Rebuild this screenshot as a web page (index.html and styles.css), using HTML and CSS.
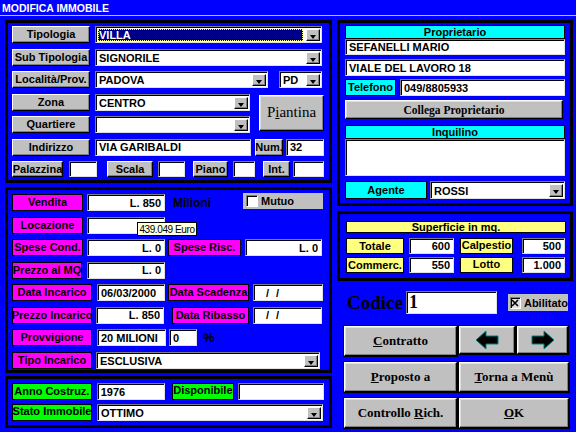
FILE: index.html
```html
<!DOCTYPE html>
<html lang="it">
<head>
<meta charset="utf-8">
<title>Modifica Immobile</title>
<link rel="stylesheet" href="styles.css">
</head>
<body>
<header class="title">MODIFICA IMMOBILE</header>
<main class="main">
  <div class="col-left">
    <section class="panel p1">
      <div class="row">
        <span class="lbl gray w78">Tipologia</span>
        <span class="combo ml5 w227"><span class="val sel">VILLA</span><i class="dd"></i></span>
      </div>
      <div class="row">
        <span class="lbl gray w78">Sub Tipologia</span>
        <span class="combo ml5 w227"><span class="val">SIGNORILE</span><i class="dd"></i></span>
      </div>
      <div class="row">
        <span class="lbl gray w78">Località/Prov.</span>
        <span class="combo ml5 w173"><span class="val">PADOVA</span><i class="dd"></i></span>
        <span class="combo ml11 w43"><span class="val">PD</span><i class="dd"></i></span>
      </div>
      <div class="grp">
        <div class="grp-rows">
          <div class="row">
            <span class="lbl gray w78">Zona</span>
            <span class="combo ml5 w155"><span class="val">CENTRO</span><i class="dd"></i></span>
          </div>
          <div class="row">
            <span class="lbl gray w78">Quartiere</span>
            <span class="combo ml5 w155"><span class="val"></span><i class="dd"></i></span>
          </div>
        </div>
        <button class="btn piantina"><span>P<u>i</u>antina</span></button>
      </div>
      <div class="row">
        <span class="lbl gray w78">Indirizzo</span>
        <span class="inp ml5 w156">VIA GARIBALDI</span>
        <span class="lbl gray ml4 w28">Num.</span>
        <span class="inp ml3 w38">32</span>
      </div>
      <div class="row h16">
        <span class="lbl gray w51">Palazzina</span>
        <span class="inp ml6 w28"></span>
        <span class="lbl gray ml10 w46">Scala</span>
        <span class="inp ml5 w27"></span>
        <span class="lbl gray ml8 w35">Piano</span>
        <span class="inp ml5 w22"></span>
        <span class="lbl gray ml8 w27">Int.</span>
        <span class="inp ml3 w31"></span>
      </div>
    </section>

    <section class="panel p2">
      <div class="row">
        <span class="lbl mag w71">Vendita</span>
        <span class="inp r ml4 w78">L. 850</span>
        <span class="txt ml8">Milioni</span>
        <span class="chk mutuo"><i class="box"></i>Mutuo</span>
      </div>
      <div class="row">
        <span class="lbl mag w71">Locazione</span>
        <span class="inp r ml4 w78"></span>
      </div>
      <div class="row">
        <span class="lbl mag w71">Spese Cond.</span>
        <span class="inp r ml4 w78">L. 0</span>
        <span class="lbl mag ml3 w73">Spese Risc.</span>
        <span class="inp r ml4 w77">L. 0</span>
      </div>
      <div class="row">
        <span class="lbl mag w70">Prezzo al MQ</span>
        <span class="inp r ml5 w78">L. 0</span>
      </div>
      <div class="row">
        <span class="lbl mag w80">Data Incarico</span>
        <span class="inp ml5 w68">06/03/2000</span>
        <span class="lbl mag ml3 w81">Data Scadenza</span>
        <span class="inp ml4 w70 dates">/ /</span>
      </div>
      <div class="row">
        <span class="lbl mag w80">Prezzo Incarico</span>
        <span class="inp r ml4 w68">L. 850</span>
        <span class="lbl mag ml8 w77">Data Ribasso</span>
        <span class="inp ml4 w69 dates">/ /</span>
      </div>
      <div class="row">
        <span class="lbl mag w80">Provvigione</span>
        <span class="inp ml5 w69">20 MILIONI</span>
        <span class="inp ml3 w28">0</span>
        <span class="txt pct ml6">%</span>
      </div>
      <div class="row">
        <span class="lbl mag w80">Tipo Incarico</span>
        <span class="combo ml4 w224"><span class="val">ESCLUSIVA</span><i class="dd"></i></span>
      </div>
      <div class="tooltip">439.049 Euro</div>
    </section>

    <section class="panel p3">
      <div class="row">
        <span class="lbl grn w80">Anno Costruz.</span>
        <span class="inp ml5 w68">1976</span>
        <span class="lbl grn top ml7 w63">Disponibile</span>
        <span class="inp ml4 w86"></span>
      </div>
      <div class="row">
        <span class="lbl grn top w80">Stato Immobile</span>
        <span class="combo ml5 w226"><span class="val">OTTIMO</span><i class="dd"></i></span>
      </div>
    </section>
  </div>

  <div class="col-right">
    <section class="panel r1">
      <div class="hdr">Proprietario</div>
      <div class="inp h16">SEFANELLI MARIO</div>
      <div class="inp mt4">VIALE DEL LAVORO 18</div>
      <div class="row mt3">
        <span class="lbl cyan w51">Telefono</span>
        <span class="inp ml4 w165">049/8805933</span>
      </div>
      <button class="btn collega mt4"><span>Collega Proprietario</span></button>
      <div class="hdr mt6">Inquilino</div>
      <div class="inp area"></div>
      <div class="row mt5 h18">
        <span class="lbl cyan w82">Agente</span>
        <span class="combo ml3 w135"><span class="val">ROSSI</span><i class="dd"></i></span>
      </div>
    </section>

    <section class="panel r2">
      <div class="hdr yel">Superficie in mq.</div>
      <div class="row h16 mt5">
        <span class="lbl yel w58">Totale</span>
        <span class="inp r ml5 w45">600</span>
        <span class="lbl yel top ml6 w53">Calpestio</span>
        <span class="inp r ml9 w43">500</span>
      </div>
      <div class="row h16 mt3">
        <span class="lbl yel w58">Commerc.</span>
        <span class="inp r ml5 w45">550</span>
        <span class="lbl yel top ml6 w53">Lotto</span>
        <span class="inp r ml9 w43">1.000</span>
      </div>
    </section>

    <div class="codice">
      <span class="codice-lbl">Codice</span>
      <span class="inp codice-inp">1</span>
      <span class="chk abil"><i class="box checked"><svg width="8" height="8" viewBox="0 0 8 8"><path d="M1 1L7 7M7 1L1 7" stroke="#000" stroke-width="1.6"/></svg></i>Abilitato</span>
    </div>

    <div class="btns">
      <button class="btn big"><span><u>C</u>ontratto</span></button>
      <div class="arrows">
        <button class="btn arrow a-left"><svg width="24" height="20" viewBox="0 0 24 20"><polygon points="1,10 11,1 11,6 23,6 23,14 11,14 11,19" fill="#000" stroke="#008080" stroke-width="1"/></svg></button>
        <button class="btn arrow a-right"><svg width="24" height="20" viewBox="0 0 24 20"><polygon points="23,10 13,1 13,6 1,6 1,14 13,14 13,19" fill="#000" stroke="#008080" stroke-width="1"/></svg></button>
      </div>
      <button class="btn big"><span><u>P</u>roposto a</span></button>
      <button class="btn big"><span><u>T</u>orna a Menù</span></button>
      <button class="btn big"><span>Controllo <u>R</u>ich.</span></button>
      <button class="btn big"><span><u>O</u>K</span></button>
    </div>
  </div>
</main>
</body>
</html>
```

FILE: styles.css
```css
* { box-sizing: border-box; }
html, body { margin: 0; padding: 0; }
body {
  width: 576px;
  height: 432px;
  overflow: hidden;
  background: #0000ff;
  font-family: "Liberation Sans", Arial, sans-serif;
  font-size: 11px;
  font-weight: bold;
  color: #000;
}
.title {
  height: 16px;
  border-bottom: 1px solid #c0c0c0;
  color: #fff;
  font-size: 10.5px;
  line-height: 10px;
  padding: 3px 0 0 2px;
}
.main { display: flex; gap: 5px; padding: 4px 0 0 5px; }
.col-left { width: 327px; display: flex; flex-direction: column; }
.col-right { width: 236px; display: flex; flex-direction: column; }

.panel { border: 3px solid #000; position: relative; }
.p1 { height: 163px; padding: 3px 0 0 4px; display: flex; flex-direction: column; gap: 5.5px; }
.p2 { height: 186px; margin-top: 4px; padding: 4px 5px 0 4px; display: flex; flex-direction: column; gap: 5.5px; }
.p3 { height: 52px; margin-top: 3px; padding: 4px 5px 0 4px; display: flex; flex-direction: column; gap: 4px; }
.r1 { height: 186px; padding: 2px 5px 0 5px; display: flex; flex-direction: column; }
.r2 { height: 70px; margin-top: 5px; padding: 7px 4px 0 6px; display: flex; flex-direction: column; }

.row { display: flex; align-items: stretch; height: 17px; }
.row.h16 { height: 16px; }
.row.h18 { height: 18px; }
.grp { display: flex; align-items: flex-start; }
.grp-rows { display: flex; flex-direction: column; gap: 5.5px; }

.lbl {
  display: flex; align-items: center; justify-content: center;
  white-space: nowrap; line-height: 1;
  border: 1px solid #000;
}
.lbl.top { align-items: flex-start; padding-top: 1px; }
.gray {
  background: #c0c0c0;
  border-color: #fff #000 #000 #fff;
  box-shadow: inset -1px -1px #808080;
}
.mag { background: #ff00ff; }
.grn { background: #00ff00; }
.cyan { background: #00ffff; }
.yel { background: #ffff80; }

.inp {
  display: flex; align-items: center;
  background: #fff;
  height: 17px;
  padding: 0 3px;
  white-space: nowrap;
  border: 1px solid;
  border-color: #808080 #e0e0e0 #e0e0e0 #808080;
  box-shadow: inset 1px 1px #000;
}
.row .inp { height: auto; }
.inp.h16 { height: 16px; }
.inp.r { justify-content: flex-end; }
.inp.dates { padding-left: 12px; letter-spacing: 2px; }
.inp.area { height: 37px; }

.combo {
  display: flex; align-items: stretch;
  background: #fff;
  border: 1px solid;
  border-color: #808080 #e0e0e0 #e0e0e0 #808080;
  box-shadow: inset 1px 1px #000;
  padding: 2px 1px 1px 2px;
}
.combo .val { flex: 1; display: flex; align-items: center; padding-left: 1px; white-space: nowrap; }
.combo .val.sel {
  color: #fff;
  background: repeating-conic-gradient(#000090 0 25%, #000020 0 50%) 0 0 / 2px 2px;
  outline: 1px dotted #ffff90;
  outline-offset: -1px;
  margin-right: 3px;
}
.combo .dd {
  width: 14px;
  background: #c0c0c0;
  border: 1px solid;
  border-color: #fff #000 #000 #fff;
  box-shadow: inset -1px -1px #808080;
  position: relative;
}
.combo .dd::after {
  content: "";
  position: absolute;
  left: 3px; top: 5px;
  border-left: 3.5px solid transparent;
  border-right: 3.5px solid transparent;
  border-top: 4px solid #000;
}

.txt { display: flex; align-items: center; font-size: 12px; color: #000; }
.txt.pct { font-size: 13px; }
.chk { display: flex; align-items: center; background: #c0c0c0; gap: 3px; }
.chk .box { width: 12px; height: 12px; background: #fff; border: 1px solid; border-color: #808080 #fff #fff #808080; box-shadow: inset 1px 1px #000; display: flex; align-items: center; justify-content: center; }
.mutuo { margin-left: auto; margin-right: 1px; width: 80px; height: 16px; padding-left: 3px; margin-top: -1px; }
.abil { width: 60px; height: 17px; padding-left: 2px; margin-left: 11px; margin-top: 3px; }
.abil .box { background: #e0e0e0; }

.tooltip {
  position: absolute; left: 129px; top: 32px;
  width: 60px; height: 14px;
  background: #ffffe1; border: 1px solid #000;
  font-weight: normal; font-size: 10px; letter-spacing: -0.4px;
  display: flex; align-items: center; justify-content: center;
}

.hdr { height: 14px; background: #00ffff; border: 1px solid #000; text-align: center; line-height: 12px; }
.hdr.yel { background: #ffff80; height: 12px; line-height: 10px; }

.btn {
  font-family: "Liberation Serif", "Times New Roman", serif;
  font-weight: bold;
  color: #000;
  background: #c0c0c0;
  border: 1px solid;
  border-color: #fff #000 #000 #fff;
  box-shadow: inset -1px -1px #808080, inset 1px 1px #dfdfdf;
  padding: 0;
  margin: 0;
  display: flex; align-items: center; justify-content: center;
  white-space: nowrap;
}
.piantina { width: 65px; height: 36px; margin: 1px 0 0 9px; font-size: 15px; font-weight: normal; }
.collega { width: 218px; height: 19px; font-size: 11.5px; }
.codice { display: flex; align-items: flex-start; height: 23px; margin-top: 10px; padding-left: 10px; }
.codice-lbl { font-family: "Liberation Serif", "Times New Roman", serif; font-size: 19px; line-height: 23px; }
.codice-inp { width: 91px; height: 23px; margin-left: 3px; font-family: "Liberation Serif", "Times New Roman", serif; font-size: 18px; padding-left: 2px; }

.btns {
  margin-top: 12px;
  padding-left: 7px;
  display: grid;
  grid-template-columns: 113px 110px;
  grid-template-rows: 30px 30px 30px;
  column-gap: 2px;
  row-gap: 6px;
}
.big { font-size: 13px; outline: 1px solid #000; outline-offset: 0; }
.arrows { display: flex; gap: 2px; height: 28px; }
.arrow { height: 28px; outline: 1px solid #000; }
.a-left { width: 56px; }
.a-right { width: 51px; }

.mt3 { margin-top: 3px; } .mt4 { margin-top: 4px; } .mt5 { margin-top: 5px; } .mt6 { margin-top: 6px; }
.ml3 { margin-left: 3px; } .ml4 { margin-left: 4px; } .ml5 { margin-left: 5px; } .ml6 { margin-left: 6px; }
.ml7 { margin-left: 7px; } .ml8 { margin-left: 8px; } .ml9 { margin-left: 9px; } .ml10 { margin-left: 10px; } .ml11 { margin-left: 11px; }
.w22 { width: 22px; } .w27 { width: 27px; } .w28 { width: 28px; } .w31 { width: 31px; } .w35 { width: 35px; }
.w38 { width: 38px; } .w43 { width: 43px; } .w45 { width: 45px; } .w46 { width: 46px; } .w51 { width: 51px; }
.w53 { width: 53px; } .w58 { width: 58px; } .w63 { width: 63px; } .w68 { width: 68px; } .w69 { width: 69px; }
.w70 { width: 70px; } .w71 { width: 71px; } .w73 { width: 73px; } .w77 { width: 77px; } .w78 { width: 78px; }
.w80 { width: 80px; } .w81 { width: 81px; } .w82 { width: 82px; } .w86 { width: 86px; }
.w135 { width: 135px; } .w155 { width: 155px; } .w156 { width: 156px; } .w165 { width: 165px; }
.w173 { width: 173px; } .w224 { width: 224px; } .w226 { width: 226px; } .w227 { width: 227px; }
```
